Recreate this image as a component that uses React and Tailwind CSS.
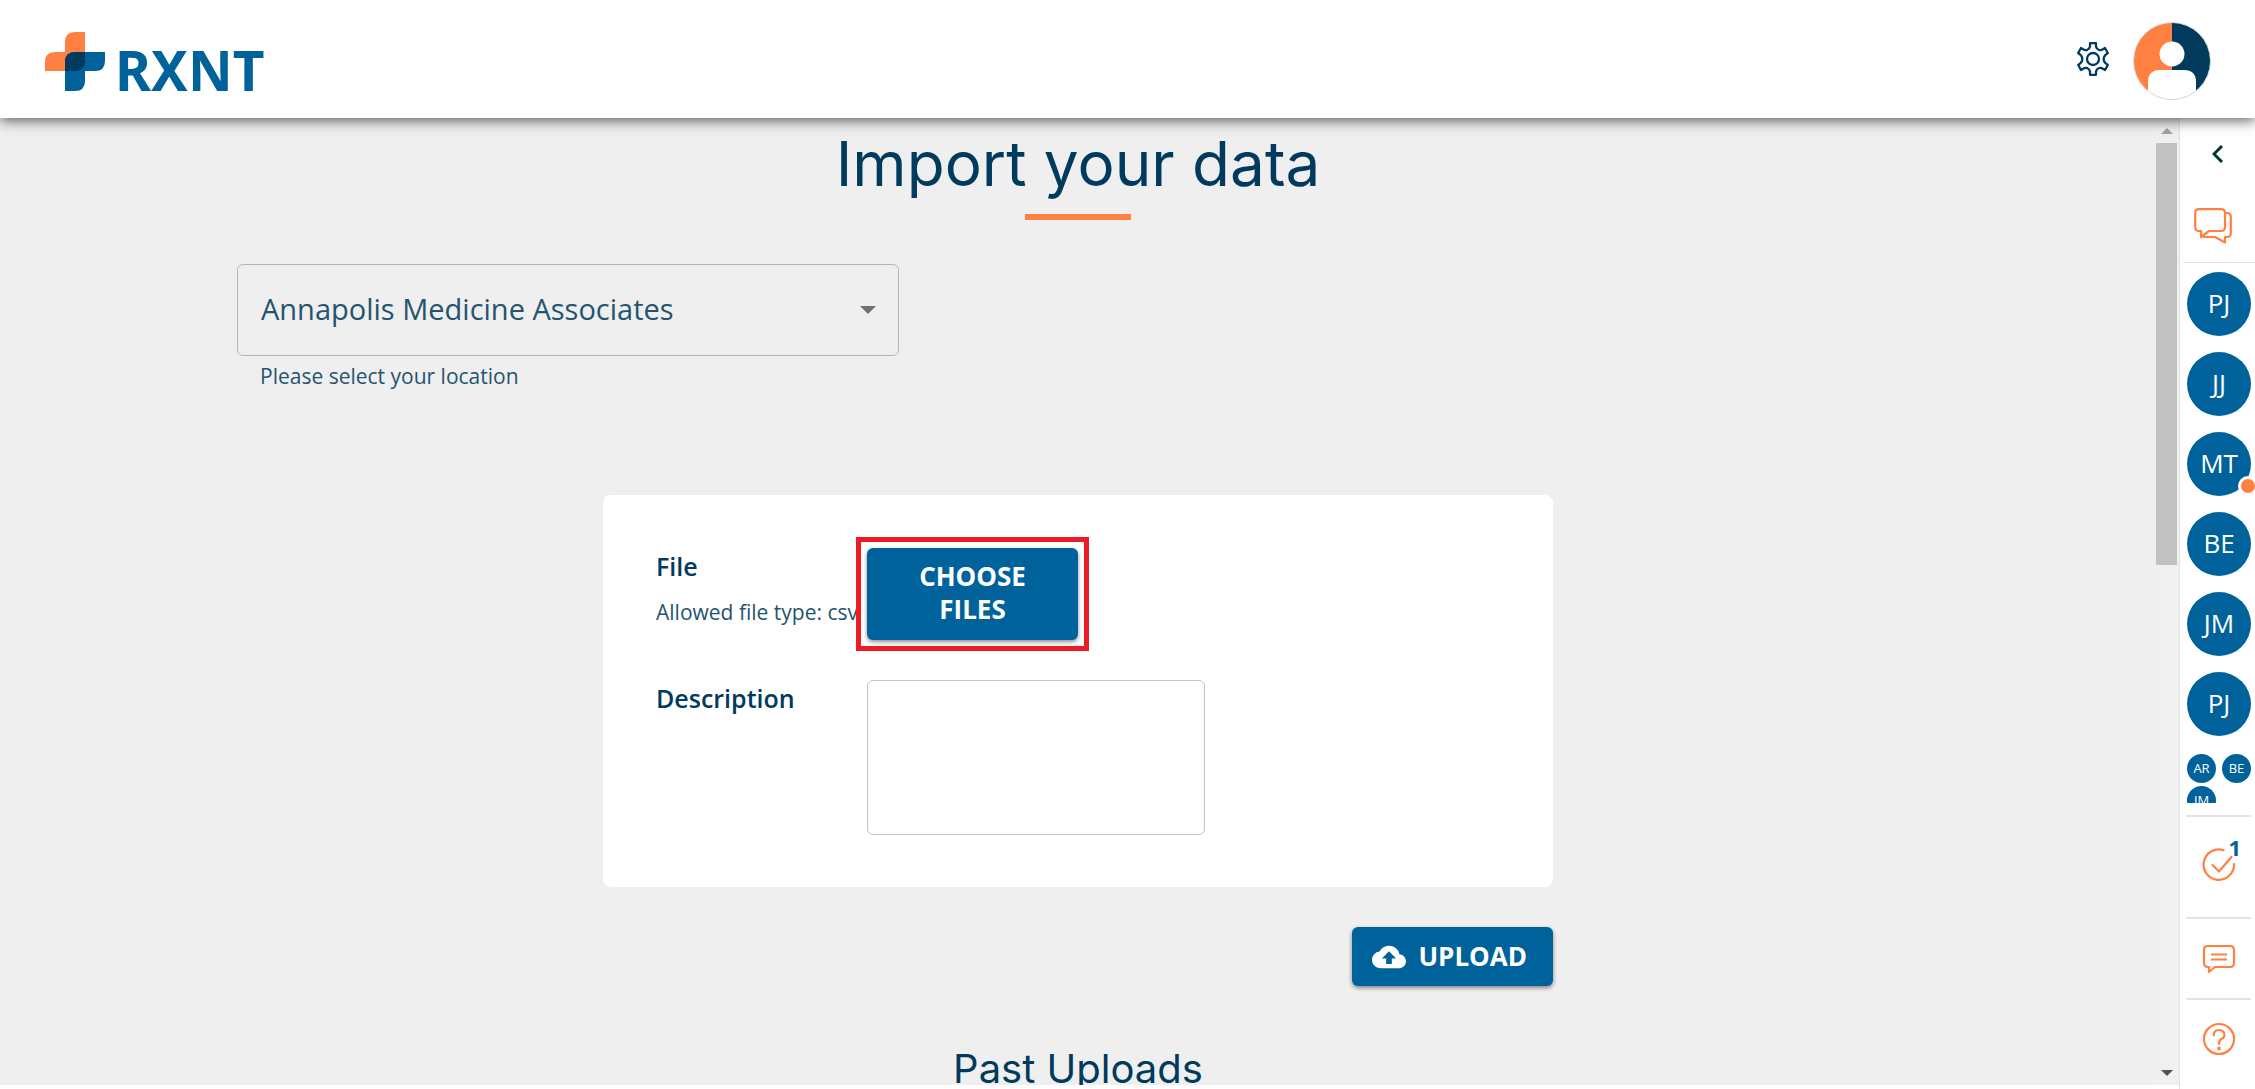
import React, { useState } from 'react';
import { MdCloudUpload } from 'react-icons/md';

const CONTACTS = [
  { id: 1, initials: 'PJ' },
  { id: 2, initials: 'JJ' },
  { id: 3, initials: 'MT', away: true },
  { id: 4, initials: 'BE' },
  { id: 5, initials: 'JM' },
  { id: 6, initials: 'PJ' },
];

const GROUP = ['AR', 'BE', 'JM'];

function Logo() {
  return (
    <a href="#home" aria-label="RXNT" className="flex items-end gap-2.5 pt-1">
      <svg viewBox="0 0 60 59" className="h-[59px] w-[60px]" aria-hidden="true">
        <path d="M0 39V30Q0 20 10 20H20V10Q20 0 30 0H40V29Q40 39 30 39Z" fill="#ff8040" />
        <path d="M20 59V30Q20 20 30 20H60V29Q60 39 50 39H40V49Q40 59 30 59Z" fill="#00629b" />
        <path d="M20 39V30Q20 20 30 20H40V29Q40 39 30 39Z" fill="#003a5d" />
      </svg>
      <span className="font-['Noto_Sans',sans-serif] text-[55px] leading-[42px] font-bold text-[#00629b]">
        RXNT
      </span>
    </a>
  );
}

function GearIcon() {
  return (
    <svg viewBox="0 0 32 34" className="h-[34px] w-8" fill="none" stroke="#003a5d" strokeWidth="2.3" strokeLinejoin="round" aria-hidden="true">
      <path d="M13 1.2H19V4.5Q19.4 7 22 8Q24.2 8.6 26 7.2L28 6L30.8 11L28.5 12.8Q26.6 14.6 26.6 17Q26.6 19.4 28.5 21.2L30.8 23L28 28L26 26.8Q24.2 25.4 22 26Q19.4 27 19 29.5V32.8H13V29.5Q12.6 27 10 26Q7.8 25.4 6 26.8L4 28L1.2 23L3.5 21.2Q5.4 19.4 5.4 17Q5.4 14.6 3.5 12.8L1.2 11L4 6L6 7.2Q7.8 8.6 10 8Q12.6 7 13 4.5Z" />
      <circle cx="16" cy="17" r="6" />
    </svg>
  );
}

function UserAvatar() {
  return (
    <svg viewBox="0 0 78 78" className="size-[78px]" aria-hidden="true">
      <defs>
        <clipPath id="user-clip">
          <circle cx="39" cy="39" r="38.5" />
        </clipPath>
      </defs>
      <g clipPath="url(#user-clip)">
        <path d="M0 0H39V78H0Z" fill="#ff8040" />
        <path d="M39 0H78V78H39Z" fill="#003a5d" />
        <circle cx="39" cy="32" r="12.5" fill="#fff" />
        <path d="M15 78V60Q15 48 27 48H51Q63 48 63 60V78Z" fill="#fff" />
      </g>
      <circle cx="39" cy="39" r="38.5" fill="none" stroke="#dcdcdc" />
    </svg>
  );
}

function Header() {
  return (
    <header className="relative z-10 flex h-[118px] shrink-0 items-center justify-between bg-white pr-11 pl-[45px] shadow-[0_3px_12px_rgba(0,0,0,0.6)]">
      <Logo />
      <div className="flex items-center gap-6">
        <button type="button" aria-label="Settings">
          <GearIcon />
        </button>
        <button type="button" aria-label="Account" className="pt-1">
          <UserAvatar />
        </button>
      </div>
    </header>
  );
}

function LocationSelect() {
  return (
    <div className="w-full max-w-[662px]">
      <div className="relative">
        <select
          id="location"
          className="h-[92px] w-full appearance-none rounded-md border border-[#b5b5b5] bg-transparent px-[23px] pb-0.5 text-[29px] text-[#24546f]"
        >
          <option>Annapolis Medicine Associates</option>
        </select>
        <svg viewBox="0 0 16 8" className="pointer-events-none absolute top-[42px] right-[23px] h-2 w-4" aria-hidden="true">
          <path d="M0 0H16L8 8Z" fill="#707070" />
        </svg>
      </div>
      <label htmlFor="location" className="mt-2 block px-[23px] text-[21px] leading-6 text-[#24546f]">
        Please select your location
      </label>
    </div>
  );
}

function UploadForm() {
  const [description, setDescription] = useState('');

  return (
    <form className="w-full max-w-[950px]" onSubmit={(e) => e.preventDefault()}>
      <div className="flex flex-col gap-10 rounded-lg bg-white px-[53px] pt-[53px] pb-[52px]">
        <div className="flex">
          <div className="w-1/4 shrink-0 whitespace-nowrap">
            <h2 className="text-[25px] leading-9 font-semibold text-[#003a5d]">File</h2>
            <p className="mt-3 text-[21px] leading-8 text-[#24546f]">Allowed file type: csv</p>
          </div>
          <div className="relative w-1/4">
            <button
              type="button"
              className="h-[92px] w-full rounded-md bg-[#00629b] px-10 pb-0.5 text-[26px] leading-[33px] font-bold text-white shadow-[0_2px_4px_rgba(0,0,0,0.45)]"
            >
              CHOOSE FILES
            </button>
            <div className="pointer-events-none absolute -inset-[11px] border-[5px] border-[#ed1c24]" />
          </div>
        </div>
        <div className="flex">
          <label htmlFor="description" className="w-1/4 shrink-0 text-[25px] leading-9 font-semibold text-[#003a5d]">
            Description
          </label>
          <textarea
            id="description"
            value={description}
            onChange={(e) => setDescription(e.target.value)}
            className="block h-[155px] w-2/5 resize-none rounded-md border border-[#c4c4c4] bg-white p-4 text-[20px] text-[#003a5d]"
          />
        </div>
      </div>
      <div className="mt-10 flex justify-end">
        <button
          type="submit"
          className="flex h-[59px] items-center gap-3 rounded-md bg-[#00629b] pr-[26px] pl-5 text-[26px] font-bold text-white shadow-[0_2px_4px_rgba(0,0,0,0.45)]"
        >
          <MdCloudUpload className="size-[34px]" />
          UPLOAD
        </button>
      </div>
    </form>
  );
}

function Scrollbar() {
  return (
    <div className="flex w-[21px] shrink-0 flex-col items-center bg-[#f0f0f0]" aria-hidden="true">
      <div className="flex h-[25px] items-center">
        <svg viewBox="0 0 12 6" className="h-1.5 w-3">
          <path d="M0 6L6 0L12 6Z" fill="#a3a3a3" />
        </svg>
      </div>
      <div className="w-full flex-1">
        <div className="h-[46%] bg-[#c1c1c1]" />
      </div>
      <div className="flex h-[25px] items-center">
        <svg viewBox="0 0 12 6" className="h-1.5 w-3">
          <path d="M0 0H12L6 6Z" fill="#505050" />
        </svg>
      </div>
    </div>
  );
}

function ChatsIcon() {
  return (
    <svg viewBox="0 0 38 36" className="h-9 w-[38px]" fill="none" stroke="#ff8040" strokeWidth="2.2" strokeLinejoin="round" aria-hidden="true">
      <path d="M5 1.2H27Q31 1.2 31 5V19Q31 23 27 23H15L7 29V23H5Q1.2 23 1.2 19V5Q1.2 1.2 5 1.2Z" />
      <path d="M31 5H33Q36.8 5 36.8 9V25Q36.8 29 33 29H31V34.5L21 29H11L8 28" />
    </svg>
  );
}

function TaskIcon() {
  return (
    <svg viewBox="0 0 34 34" className="size-[34px]" fill="none" stroke="#ff8040" strokeWidth="2.2" strokeLinecap="round" aria-hidden="true">
      <path d="M21.5 2.2A15.2 15.2 0 1 0 32 16" />
      <path d="M10.5 17L17 23.5L29.5 9" />
    </svg>
  );
}

function MessageIcon() {
  return (
    <svg viewBox="0 0 34 30" className="h-[30px] w-[34px]" fill="none" stroke="#ff8040" strokeWidth="2.2" strokeLinejoin="round" aria-hidden="true">
      <path d="M6 2H28Q32 2 32 6V19Q32 23 28 23H13L7 28V23H6Q2 23 2 19V6Q2 2 6 2Z" />
      <path d="M9 10.5H25M9 15.5H25" />
    </svg>
  );
}

function HelpIcon() {
  return (
    <svg viewBox="0 0 34 34" className="size-[34px]" fill="none" stroke="#ff8040" strokeWidth="2.2" aria-hidden="true">
      <circle cx="17" cy="17" r="15" />
      <path d="M11.8 13.5Q11.8 8 17 8Q22.4 8 22.4 13Q22.4 15.8 19.4 17Q17 18.2 17 22" strokeLinecap="round" />
      <circle cx="17" cy="26.5" r="0.8" fill="#ff8040" />
    </svg>
  );
}

function Sidebar() {
  return (
    <aside className="flex w-[76px] shrink-0 flex-col overflow-hidden border-l border-[#e3e3e3] bg-white">
      <button type="button" aria-label="Expand" className="flex h-[72px] items-center justify-center">
        <svg viewBox="0 0 12 18" className="h-[18px] w-3" fill="none" stroke="#003a28" strokeWidth="3" aria-hidden="true">
          <path d="M10 1L2 9L10 17" />
        </svg>
      </button>
      <button type="button" aria-label="Chats" className="ml-[3px] flex h-[73px] items-center border-b border-[#e3e3e3] pl-[11px]">
        <ChatsIcon />
      </button>
      <div className="flex h-[540px] shrink-0 flex-col items-start gap-4 overflow-hidden pt-[9px] pl-[7px]">
        {CONTACTS.map((c) => (
          <button
            key={c.id}
            type="button"
            className="relative size-16 shrink-0 rounded-full bg-[#00629b] pb-0.5 text-[26px] text-white"
          >
            {c.initials}
            {c.away && (
              <span className="absolute -right-[7px] bottom-0 size-5 rounded-full border-[3px] border-white bg-[#ff8040]" />
            )}
          </button>
        ))}
        <div className="flex w-16 shrink-0 flex-wrap gap-x-1.5 gap-y-[3px] pt-0.5">
          {GROUP.map((initials) => (
            <button key={initials} type="button" className="size-[29px] rounded-full bg-[#00629b] text-[13px] text-white">
              {initials}
            </button>
          ))}
        </div>
      </div>
      <div className="mt-3 mr-1 ml-1.5 flex flex-col">
        <button type="button" aria-label="Tasks" className="relative flex h-[102px] items-center justify-center border-t-2 border-[#e3e3e3] pb-1">
          <TaskIcon />
          <span className="absolute top-[18px] right-2.5 text-[22px] leading-6 font-bold text-[#00629b]">1</span>
        </button>
        <button type="button" aria-label="Messages" className="flex h-[81px] items-center justify-center border-t-2 border-[#e3e3e3]">
          <MessageIcon />
        </button>
        <button type="button" aria-label="Help" className="flex h-20 items-center justify-center border-t-2 border-[#e3e3e3]">
          <HelpIcon />
        </button>
      </div>
    </aside>
  );
}

export default function App() {
  return (
    <div className="flex h-screen flex-col overflow-hidden bg-white font-['Open_Sans',sans-serif]">
      <Header />
      <div className="flex min-h-0 flex-1">
        <div className="mb-1 flex min-w-0 flex-1 bg-[#efefef]">
          <main className="flex min-w-0 flex-1 flex-col items-center overflow-hidden px-[237px]">
            <h1 className="mt-2 font-['Inter',sans-serif] text-[62px] leading-[76px] font-normal text-[#003a5d]">
              Import your data
            </h1>
            <div className="mt-3 h-1.5 w-[106px] shrink-0 bg-[#ff8040]" />
            <div className="mt-11 w-full">
              <LocationSelect />
            </div>
            <div className="mt-[107px] flex w-full justify-center">
              <UploadForm />
            </div>
            <h2 className="mt-14 font-['Inter',sans-serif] text-[40px] leading-[54px] font-normal text-[#003a5d]">
              Past Uploads
            </h2>
          </main>
          <Scrollbar />
          <div className="w-0.5 shrink-0" />
        </div>
        <Sidebar />
      </div>
    </div>
  );
}
